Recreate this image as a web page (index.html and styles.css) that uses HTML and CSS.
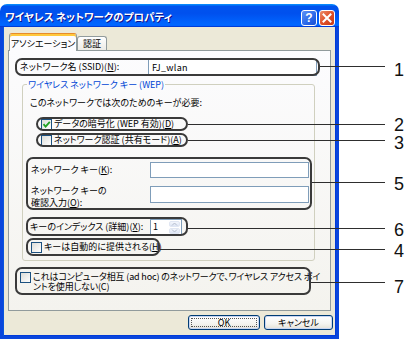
FILE: index.html
```html
<!DOCTYPE html>
<html lang="ja">
<head>
<meta charset="utf-8">
<title>ワイヤレス ネットワークのプロパティ</title>
<link rel="stylesheet" href="styles.css">
</head>
<body>
<div class="page">
  <div class="window">
    <div class="titlebar">
      <span class="title">ワイヤレス ネットワークのプロパティ</span>
      <div class="tbtns">
        <span class="tbtn help">?</span>
        <span class="tbtn close"><svg width="14" height="14" viewBox="0 0 14 14"><path d="M3.5 3.5 L10.5 10.5 M10.5 3.5 L3.5 10.5" stroke="#fff" stroke-width="2" stroke-linecap="square"/></svg></span>
      </div>
    </div>
    <div class="frame">
      <div class="tabs">
        <div class="tab active">アソシエーション</div>
        <div class="tab">認証</div>
      </div>
      <div class="panel">
        <div class="callout ssid">
          <span class="lbl">ネットワーク名 (SSID)(<u>N</u>):</span>
          <span class="field ssid-field">FJ_wlan</span>
        </div>
        <div class="group">
          <div class="legend">ワイヤレス ネットワーク キー (WEP)</div>
          <div class="need">このネットワークでは次のためのキーが必要:</div>
          <div class="callout chk chk1">
            <span class="cb"><svg width="9" height="9" viewBox="0 0 9 9"><path d="M1.5 4.2 L3.6 6.6 L7.8 1.8" fill="none" stroke="#21a121" stroke-width="1.8"/></svg></span>
            <span>データの暗号化 (WEP 有効)(<u>D</u>)</span>
          </div>
          <div class="callout chk chk2">
            <span class="cb"></span>
            <span>ネットワーク認証 (共有モード)(<u>A</u>)</span>
          </div>
          <div class="callout keybox">
            <div class="krow">
              <span>ネットワーク キー(<u>K</u>):</span>
              <span class="field kfield"></span>
            </div>
            <div class="krow krow2">
              <span>ネットワーク キーの<br>確認入力(<u>O</u>):</span>
              <span class="field kfield kfield2"></span>
            </div>
          </div>
          <div class="callout idx">
            <span>キーのインデックス (詳細)(<u>X</u>):</span>
            <span class="spin">
              <span class="spin-val">1</span>
              <span class="spin-btns">
                <span class="sb"><svg width="7" height="4" viewBox="0 0 7 4"><path d="M1 3.5 L3.5 1 L6 3.5" fill="none" stroke="#b4bccb" stroke-width="1"/></svg></span>
                <span class="sb"><svg width="7" height="4" viewBox="0 0 7 4"><path d="M1 0.5 L3.5 3 L6 0.5" fill="none" stroke="#b4bccb" stroke-width="1"/></svg></span>
              </span>
            </span>
          </div>
          <div class="callout chk auto">
            <span class="cb"></span>
            <span>キーは自動的に提供される(<u>H</u>)</span>
          </div>
        </div>
        <div class="callout adhoc">
          <span class="cb"></span>
          <span class="adhoc-text">これはコンピュータ相互 (ad hoc) のネットワークで、ワイヤレス アクセス ポイ<br>ントを使用しない(C)</span>
        </div>
      </div>
      <div class="buttons">
        <span class="btn ok"><span class="focus">OK</span></span>
        <span class="btn cancel">キャンセル</span>
      </div>
    </div>
  </div>
  <div class="ann">
    <span class="lead l1"></span><span class="num n1">1</span>
    <span class="lead l2"></span><span class="num n2">2</span>
    <span class="lead l3"></span><span class="num n3">3</span>
    <span class="lead l5"></span><span class="num n5">5</span>
    <span class="lead l6"></span><span class="num n6">6</span>
    <span class="lead l4"></span><span class="num n4">4</span>
    <span class="lead l7"></span><span class="num n7">7</span>
  </div>
</div>
</body>
</html>
```
FILE: styles.css
```css
* { box-sizing: border-box; }
html, body { margin: 0; padding: 0; }
body {
  width: 406px;
  height: 344px;
  overflow: hidden;
  background: #fff;
  font-family: "Noto Sans CJK JP", "Noto Sans CJK SC", sans-serif;
  font-size: 9px;
  line-height: 12px;
  font-feature-settings: "palt";
  color: #000;
  white-space: nowrap;
}
u { text-decoration-thickness: 1px; text-underline-offset: 1px; }
.page { position: relative; width: 406px; height: 344px; padding-top: 4px; }
.window { width: 339px; }

/* title bar */
.titlebar {
  height: 23px;
  display: flex;
  justify-content: space-between;
  align-items: flex-start;
  padding: 0 4px 0 5px;
  border-radius: 7px 7px 0 0;
  background: linear-gradient(180deg, #0997ff 0%, #0053ee 10%, #0050ee 40%, #0066ff 88%, #0066ff 93%, #005bff 95%, #003dd7 96%, #003dd7 100%);
}
.title {
  color: #fff;
  font-weight: bold;
  font-size: 10.5px;
  line-height: 13px;
  margin-top: 6px;
  text-shadow: 1px 1px 0 #0f1089;
}
.tbtns { display: flex; gap: 2px; margin-top: 6px; }
.tbtn {
  width: 16px;
  height: 16px;
  border: 1px solid #fff;
  border-radius: 3px;
  display: flex;
  align-items: center;
  justify-content: center;
}
.help {
  background: linear-gradient(135deg, #5f93f7 0%, #2a67e8 60%, #1a4fd0 100%);
  color: #fff;
  font-family: "Liberation Sans", Arial, sans-serif;
  font-weight: bold;
  font-size: 12px;
  line-height: 14px;
}
.close { background: linear-gradient(135deg, #ec8d6c 0%, #e0512a 50%, #c83a14 100%); }

/* frame */
.frame {
  background: #ece9d8;
  padding: 6px 5px 6px 5px;
  border: 3px solid #0a46dc;
  border-top: none;
  box-shadow: inset 1px 0 #0855dd, inset -1px -1px #003bda;
}
.tabs {
  display: flex;
  align-items: flex-end;
  height: 17px;
  padding-left: 1px;
  position: relative;
  z-index: 1;
}
.tab {
  width: 30px;
  height: 14px;
  border: 1px solid #919b9c;
  border-bottom: none;
  border-radius: 3px 3px 0 0;
  background: linear-gradient(#ffffff, #ecebe6);
  text-align: center;
  line-height: 13px;
}
.tab.active {
  width: 68px;
  height: 18px;
  margin-bottom: -1px;
  background: #fcfcfe;
  border-top: 1px solid #e68b2c;
  box-shadow: inset 0 2px #ffc83c;
  line-height: 17px;
  padding-top: 1px;
}
.panel {
  height: 261px;
  border: 1px solid #919b9c;
  background: linear-gradient(#fcfcfe, #f4f3ee);
  padding: 7px 0 0 6px;
}

/* callout outlines (annotation over the dialog) */
.callout { position: relative; }
.callout::before {
  content: "";
  position: absolute;
  inset: 0;
  border: 2px solid #3a3a3a;
  border-radius: 7px;
  pointer-events: none;
}

.field {
  display: block;
  background: #fff;
  border: 1px solid #7f9db9;
}
.ssid {
  width: 305px;
  height: 18px;
  display: flex;
  align-items: center;
  padding: 0 3px 0 5px;
}
.ssid-field {
  margin-left: auto;
  width: 169px;
  height: 17px;
  padding-left: 3px;
  line-height: 15px;
  letter-spacing: 0.3px;
}

.group {
  margin: 8px 0 0 7px;
  width: 293px;
  height: 177px;
  border: 1px solid #d0d0bf;
  border-radius: 3px;
}
.legend {
  width: fit-content;
  height: 13px;
  margin: -7px 0 0 4px;
  padding: 0 1px;
  line-height: 13px;
  color: #0046d5;
  background: #fbfbfc;
}
.need { margin: 6px 0 0 7px; }

.cb {
  width: 11px;
  height: 11px;
  flex: none;
  border: 1px solid #1c5180;
  background: linear-gradient(135deg, #dcdcd7, #ffffff);
  display: flex;
  align-items: center;
  justify-content: center;
}
.chk {
  display: flex;
  align-items: center;
  gap: 2px;
  padding-left: 5px;
}
.chk1 { margin: 8px 0 0 13px; width: 152px; height: 14px; }
.chk2 { margin: 2px 0 0 13px; width: 152px; height: 14px; }

.keybox {
  margin: 10px 0 0 3px;
  width: 286px;
  height: 53px;
  padding: 5px 3px 0 5px;
}
.krow {
  display: flex;
  justify-content: space-between;
  align-items: center;
  height: 16px;
}
.krow2 { align-items: flex-start; height: 24px; margin-top: 7px; }
.kfield { width: 159px; height: 16px; }
.kfield2 { height: 17px; margin-top: 1px; }

.idx {
  margin: 7px 0 0 3px;
  width: 162px;
  height: 19px;
  display: flex;
  align-items: center;
  padding: 0 6px 0 4px;
}
.spin {
  margin-left: auto;
  width: 32px;
  height: 16px;
  border: 1px solid #7f9db9;
  background: #fff;
  display: flex;
}
.spin-val { flex: 1; padding-left: 2px; line-height: 14px; }
.spin-btns {
  width: 12px;
  display: flex;
  flex-direction: column;
  gap: 1px;
  padding: 1px 1px 1px 0;
}
.sb {
  flex: 1;
  border: 1px solid #e0e6f3;
  border-radius: 2px;
  background: linear-gradient(#f3f6fc, #dde5f5);
  display: flex;
  align-items: center;
  justify-content: center;
}
.auto { margin: 2px 0 0 3px; width: 134px; height: 18px; }

.adhoc {
  margin-top: 6px;
  width: 296px;
  height: 28px;
  display: flex;
  align-items: flex-start;
  gap: 2px;
  padding: 5px 0 0 5px;
}
.adhoc-text { line-height: 10px; letter-spacing: -0.15px; }

/* buttons */
.buttons {
  display: flex;
  justify-content: flex-end;
  gap: 4px;
  margin: 4px -2px 0 0;
}
.btn {
  height: 15px;
  border: 1px solid #003c74;
  border-radius: 3px;
  background: linear-gradient(#ffffff 0%, #f4f4f0 60%, #e4e1d6 100%);
  box-shadow: inset 0 0 0 1px #c8d6f2;
  display: flex;
  align-items: center;
  justify-content: center;
  line-height: 11px;
}
.ok { width: 72px; padding: 2px; }
.ok .focus {
  width: 100%;
  height: 100%;
  border: 1px dotted #555;
  display: flex;
  align-items: center;
  justify-content: center;
}
.cancel { width: 69px; }

/* annotation leads and numbers */
.ann { position: absolute; inset: 0; pointer-events: none; }
.lead { position: absolute; right: 21px; height: 1px; background: #2e2e2e; }
.l1 { top: 66px; left: 320px; }
.l2 { top: 124px; left: 188px; }
.l3 { top: 140px; left: 188px; }
.l5 { top: 182px; left: 312px; }
.l6 { top: 228px; left: 188px; }
.l4 { top: 249px; left: 160px; }
.l7 { top: 282px; left: 311px; }
.num {
  position: absolute;
  left: 394px;
  font-family: "Liberation Sans", Arial, sans-serif;
  font-size: 18px;
  line-height: 14px;
  color: #111;
}
.n1 { top: 63px; }
.n2 { top: 118px; }
.n3 { top: 136px; }
.n5 { top: 177px; }
.n6 { top: 223px; }
.n4 { top: 244px; }
.n7 { top: 280px; }
```
